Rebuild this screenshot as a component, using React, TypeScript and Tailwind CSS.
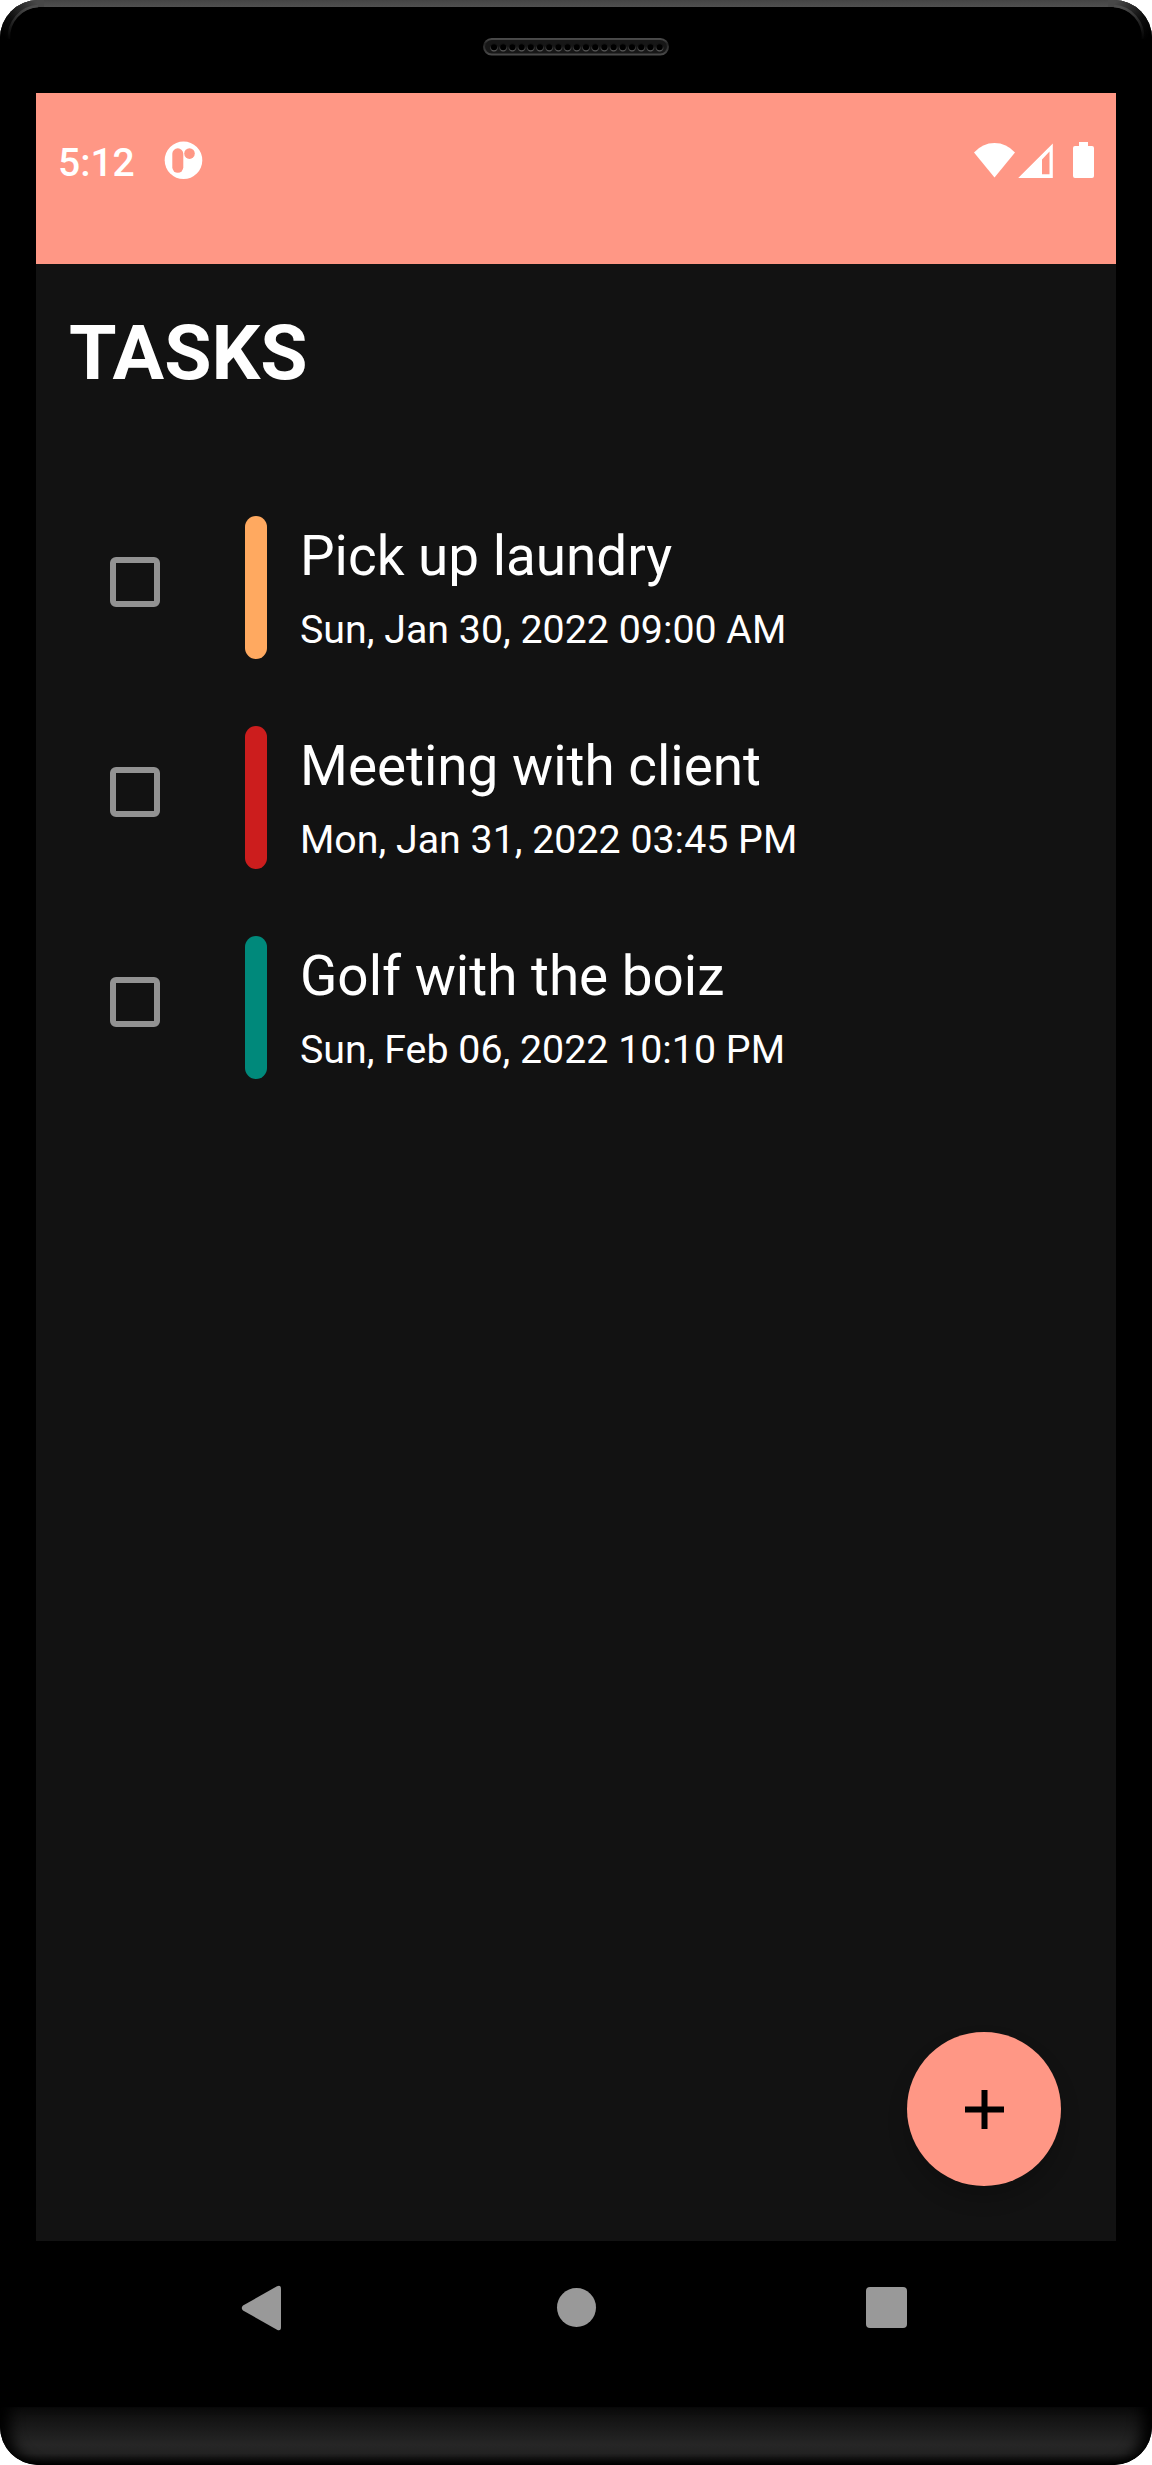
import React from "react";

type Task = { title: string; date: string; bar: string };

const tasks: Task[] = [
  { title: "Pick up laundry", date: "Sun, Jan 30, 2022 09:00 AM", bar: "bg-[#ffa960]" },
  { title: "Meeting with client", date: "Mon, Jan 31, 2022 03:45 PM", bar: "bg-[#cc1d1d]" },
  { title: "Golf with the boiz", date: "Sun, Feb 06, 2022 10:10 PM", bar: "bg-[#00897b]" },
];

function Speaker() {
  return (
    <svg width="186" height="18" viewBox="0 0 186 18">
      <defs>
        <linearGradient id="rim" x1="0" y1="0" x2="0" y2="1">
          <stop offset="0" stopColor="#4a4a4a" />
          <stop offset="0.3" stopColor="#242424" />
          <stop offset="1" stopColor="#484848" />
        </linearGradient>
        <linearGradient id="hole" x1="0" y1="0" x2="0" y2="1">
          <stop offset="0.3" stopColor="#141414" />
          <stop offset="1" stopColor="#5c5c5c" />
        </linearGradient>
      </defs>
      <rect x="1" y="1" width="184" height="15.5" rx="7.7" fill="#171717" stroke="url(#rim)" strokeWidth="2" />
      {Array.from({ length: 19 }, (_, i) => (
        <circle key={i} cx={11 + i * 9.2} cy="9.3" r="3.6" fill="#000" stroke="url(#hole)" strokeWidth="1.1" />
      ))}
    </svg>
  );
}

function CornerShine({ className }: { className: string }) {
  return (
    <svg className={className} width="44" height="44" viewBox="0 0 44 44">
      <defs>
        <linearGradient id="edge" gradientUnits="userSpaceOnUse" x1="2" y1="34" x2="38" y2="4">
          <stop offset="0" stopColor="#000" />
          <stop offset="0.35" stopColor="#0c0c0c" />
          <stop offset="1" stopColor="#484848" />
        </linearGradient>
        <linearGradient id="shine" gradientUnits="userSpaceOnUse" x1="8" y1="40" x2="30" y2="8">
          <stop offset="0" stopColor="#000" />
          <stop offset="0.6" stopColor="#303030" />
          <stop offset="1" stopColor="#4c4c4c" />
        </linearGradient>
      </defs>
      <path d="M0 44V0H44V7H40A32 32 0 0 0 8 39V44Z" fill="url(#edge)" />
      <path d="M9 39A31 31 0 0 1 38 6" fill="none" stroke="url(#shine)" strokeWidth="2.5" />
    </svg>
  );
}

function StatusBar() {
  return (
    <div className="flex h-[171px] items-start justify-between bg-[#ff9785] pl-[22px] pr-[22px]">
      <div className="flex">
        <span className="mt-[47px] w-[106px] text-[39px] leading-[46px] font-medium text-white">5:12</span>
        <svg className="mt-12" width="39" height="39" viewBox="0 0 39 39">
          <circle cx="19.5" cy="19.3" r="18.8" fill="#fff" />
          <rect x="8.3" y="7.3" width="11" height="24.5" rx="5.5" fill="#ff9785" />
          <circle cx="25.5" cy="12.6" r="5.3" fill="#ff9785" />
        </svg>
      </div>
      <svg className="mt-12" width="120" height="40" viewBox="0 0 120 40" fill="#fff">
        <path d="M0 11.5Q8.5 2 20.5 2T41 11.5L20.5 36.5Z" />
        <path fillRule="evenodd" d="M44.2 37L78.8 2.5V37ZM68 18.5V33.2H75.5V10.5Z" />
        <path d="M105 1h9v4h4a2 2 0 0 1 2 2v28a2 2 0 0 1-2 2h-17a2 2 0 0 1-2-2V7a2 2 0 0 1 2-2h4z" />
      </svg>
    </div>
  );
}

function TaskRow({ task }: { task: Task }) {
  return (
    <li className="flex h-[143px] items-start">
      <button aria-label={task.title} className="mt-[41px] ml-[74px] size-[50px] rounded-[6px] border-[6px] border-[#929292]" />
      <div className={`ml-[85px] h-[143px] w-[22px] rounded-full ${task.bar}`} />
      <div className="ml-[33px] pt-[8px] whitespace-nowrap text-white">
        <div className="text-[54.85px] leading-[64px]">{task.title}</div>
        <div className="mt-[20px] text-[39.35px] leading-[45px]">{task.date}</div>
      </div>
    </li>
  );
}

function NavBar() {
  return (
    <div className="flex h-[133px] items-center pl-[241px]">
      <svg width="41" height="46" viewBox="0 0 41 46">
        <path d="M2 20.5L36 1.3Q40 -0.5 40 4V42Q40 46.5 36 44.7L2 25.5Q-0.5 23 2 20.5Z" fill="#999" />
      </svg>
      <div className="ml-[275px] size-[39px] rounded-full bg-[#999]" />
      <div className="ml-[270px] size-[41px] rounded-[4px] bg-[#999]" />
    </div>
  );
}

export default function App() {
  return (
    <div className="h-[2465px] w-[1152px] bg-white font-['Roboto',sans-serif]">
      <div className="flex h-full flex-col overflow-hidden rounded-[38px] bg-black">
        <div className="relative flex h-[93px] flex-col">
          <div className="h-[7px] bg-[linear-gradient(to_bottom,#444,#505050)]" />
          <div className="flex justify-center pt-[31px]">
            <Speaker />
          </div>
          <CornerShine className="absolute top-0 left-0" />
          <CornerShine className="absolute top-0 right-0 -scale-x-100" />
        </div>
        <main className="mx-9 flex h-[2148px] flex-col bg-[#121212]">
          <StatusBar />
          <h1 className="mt-[44px] ml-[33px] text-[76.8px] leading-[90px] font-bold text-white">TASKS</h1>
          <ul className="mt-[118px] flex flex-col gap-[67px]">
            {tasks.map((task) => (
              <TaskRow key={task.title} task={task} />
            ))}
          </ul>
          <button
            aria-label="Add task"
            className="mt-auto mr-[55px] mb-[55px] flex size-[154px] items-center justify-center self-end rounded-full bg-[#ff9785] shadow-[0_12px_20px_rgba(0,0,0,0.2)]"
          >
            <svg width="39" height="39" viewBox="0 0 39 39" fill="#000">
              <path d="M16.5 0h6v16.5H39v6H22.5V39h-6V22.5H0v-6h16.5z" />
            </svg>
          </button>
        </main>
        <NavBar />
        <div className="mt-auto h-[58px] rounded-b-[38px] bg-[linear-gradient(to_bottom,#0b0b0b,#262626_65%,#222_80%,#000)] shadow-[inset_18px_0_14px_-8px_#000,inset_-18px_0_14px_-8px_#000]" />
      </div>
    </div>
  );
}
